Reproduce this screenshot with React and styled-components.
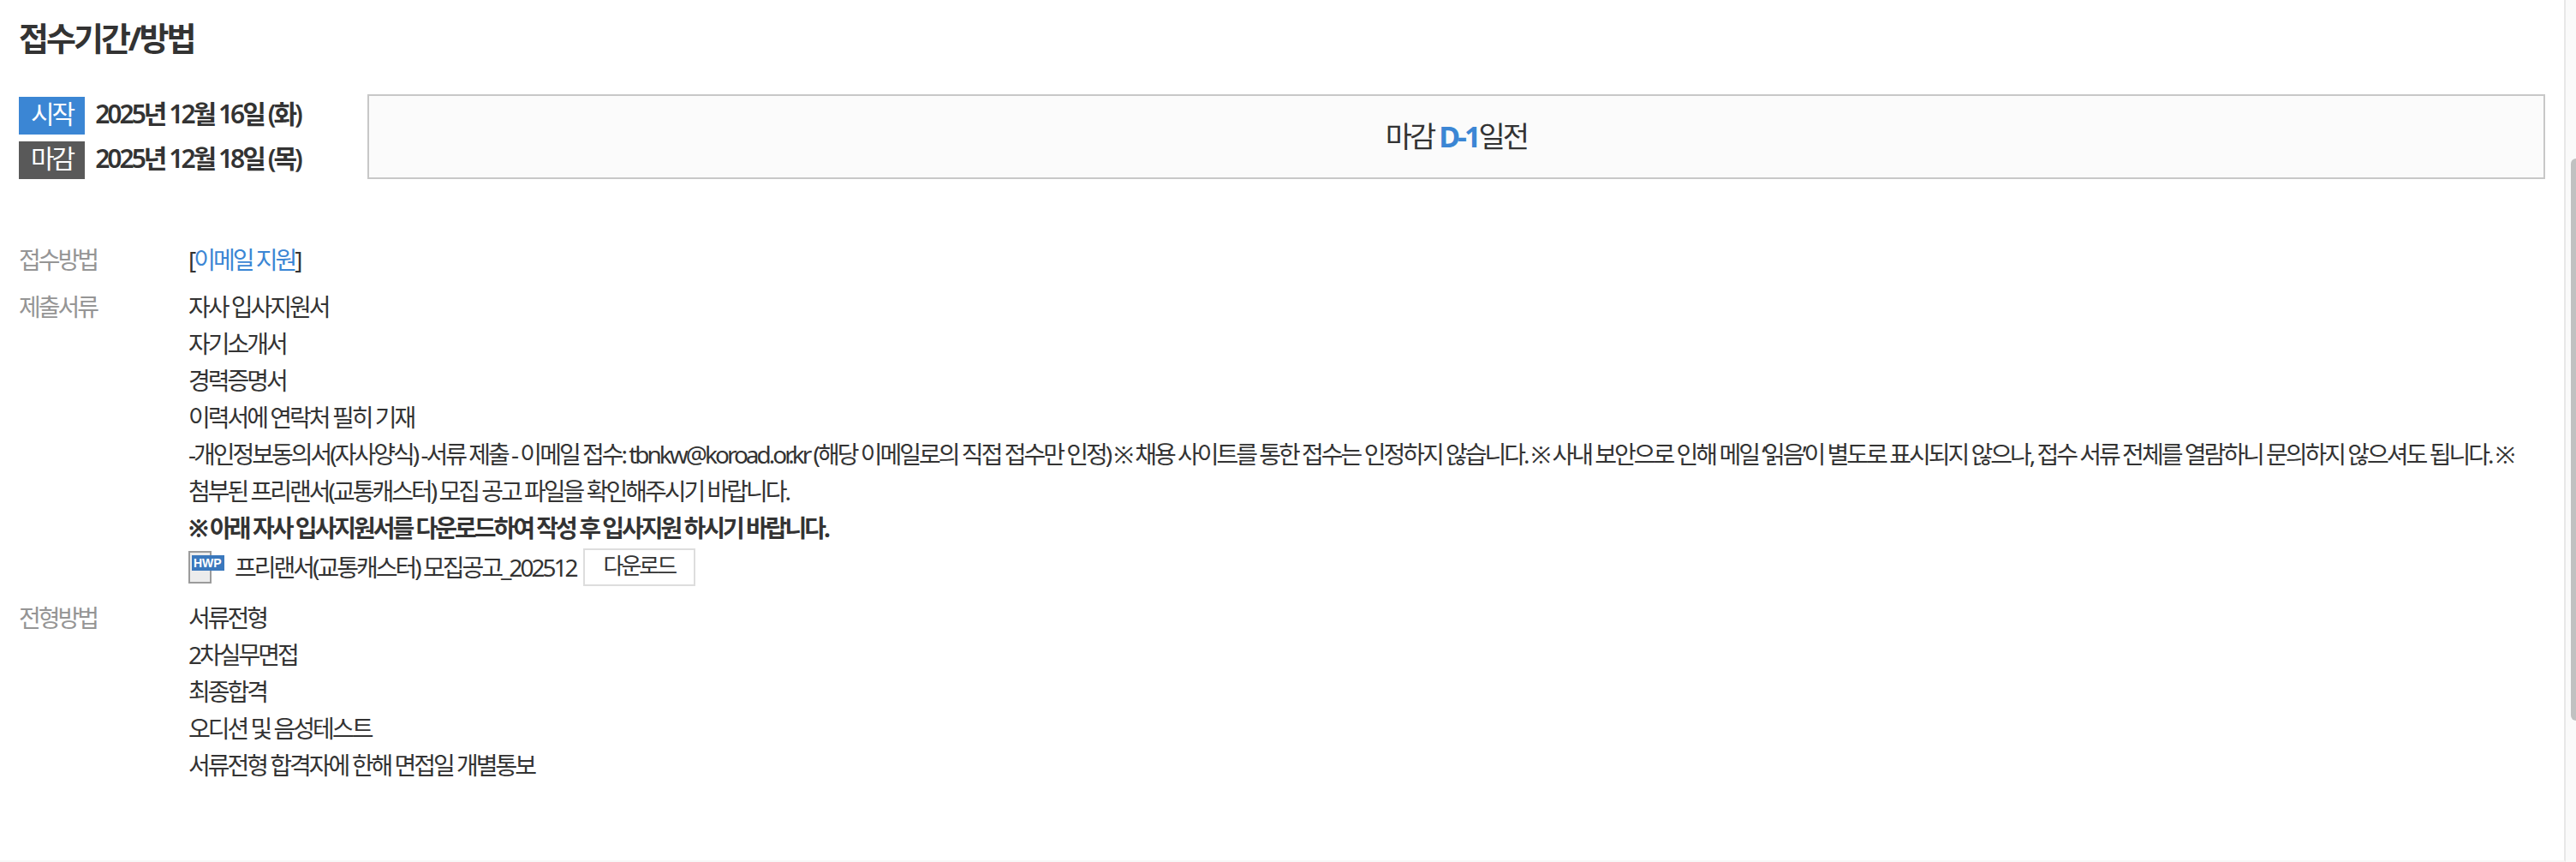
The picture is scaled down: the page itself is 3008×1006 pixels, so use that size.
import React from 'react';
import styled, { createGlobalStyle } from 'styled-components';

const documents = ['자사 입사지원서', '자기소개서', '경력증명서', '이력서에 연락처 필히 기재'];

const notice =
    '-개인정보동의서(자사양식) -서류 제출 - 이메일 접수: tbnkw@koroad.or.kr (해당 이메일로의 직접 접수만 인정) ※ 채용 사이트를 통한 접수는 인정하지 않습니다. ※ 사내 보안으로 인해 메일 ‘읽음’이 별도로 표시되지 않으나, 접수 서류 전체를 열람하니 문의하지 않으셔도 됩니다. ※ 첨부된 프리랜서(교통캐스터) 모집 공고 파일을 확인해주시기 바랍니다.';

const steps = ['서류전형', '2차실무면접', '최종합격', '오디션 및 음성테스트', '서류전형 합격자에 한해 면접일 개별통보'];

function HwpIcon() {
    return (
        <FileIcon viewBox='0 0 42 38' role='img' aria-label='HWP'>
            <rect x='1' y='1' width='25' height='36' fill='#ececec' stroke='#9b9b9b' strokeWidth='2' />
            <rect x='4' y='5' width='38' height='18' fill='#3a78bd' />
            <text x='6' y='19'>HWP</text>
        </FileIcon>
    )
}

function Period() {
    return (
        <PeriodRow>
            <Dates>
                <DateLine>
                    <Badge $start>시작</Badge>
                    <time dateTime='2025-12-16'>2025년 12월 16일 (화)</time>
                </DateLine>
                <DateLine>
                    <Badge>마감</Badge>
                    <time dateTime='2025-12-18'>2025년 12월 18일 (목)</time>
                </DateLine>
            </Dates>
            <Dday>
                <p>마감 <strong>D-1</strong>일전</p>
            </Dday>
        </PeriodRow>
    )
}

export default function App() {
    return (
        <Page>
            <GlobalStyle />
            <Content>
                <Title>접수기간/방법</Title>
                <Period />
                <Info>
                    <dt>접수방법</dt>
                    <dd>[<a href='#email'>이메일 지원</a>]</dd>
                    <dt>제출서류</dt>
                    <dd>
                        {documents.map((name) => <p key={name}>{name}</p>)}
                        <p>{notice}</p>
                        <p><strong>※ 아래 자사 입사지원서를 다운로드하여 작성 후 입사지원 하시기 바랍니다.</strong></p>
                        <FileRow>
                            <HwpIcon />
                            <span>프리랜서(교통캐스터) 모집공고_202512</span>
                            <Download type='button'>다운로드</Download>
                        </FileRow>
                    </dd>
                    <dt>전형방법</dt>
                    <dd>
                        {steps.map((name) => <p key={name}>{name}</p>)}
                    </dd>
                </Info>
            </Content>
            <ScrollTrack>
                <ScrollThumb />
            </ScrollTrack>
        </Page>
    )
}

const GlobalStyle = createGlobalStyle`
    * {
        box-sizing: border-box;
    }
    body {
        margin: 0;
        background: #fff;
        color: #333;
        font-family: 'Noto Sans', 'Noto Sans CJK KR', sans-serif;
        font-size: 28px;
        line-height: 43px;
        letter-spacing: -3px;
        word-break: keep-all;
    }
    p, dl, dd {
        margin: 0;
    }
`

const Page = styled.div`
    display: flex;
    min-height: 100vh;
`

const Content = styled.main`
    flex: 1;
    min-width: 0;
    padding: 20px 22px;
    border-right: 2px solid #e8e8e8;
    border-bottom: 2px solid #f7f7f7;
`

const Title = styled.h2`
    margin: 0 0 42px;
    font-size: 38px;
    line-height: 48px;
    font-weight: 700;
`

const PeriodRow = styled.section`
    display: flex;
    align-items: stretch;
    gap: 78px;
`

const Dates = styled.div`
    display: flex;
    flex-direction: column;
    gap: 8px;
    padding-top: 3px;
`

const DateLine = styled.div`
    display: flex;
    gap: 12px;
    font-size: 30px;
    line-height: 40px;
    font-weight: 600;
    white-space: nowrap;
`

const Badge = styled.span`
    height: 44px;
    padding: 0 14px;
    background: ${props => props.$start ? '#3b86d4' : '#595959'};
    color: #fff;
    font-weight: 400;
`

const Dday = styled.div`
    display: flex;
    flex: 1;
    align-items: center;
    justify-content: center;
    border: 2px solid #c8c8c8;
    background: #fbfbfb;
    font-size: 34px;
    strong {
        color: #3b86d4;
        font-weight: 700;
    }
`

const Info = styled.dl`
    display: grid;
    grid-template-columns: 198px 1fr;
    row-gap: 12px;
    margin-top: 73px;
    dt {
        color: #959595;
    }
    a {
        color: #3b86d4;
        text-decoration: none;
    }
`

const FileRow = styled.div`
    display: flex;
    align-items: center;
    padding: 2px 0 4px;
`

const FileIcon = styled.svg`
    width: 42px;
    height: 38px;
    margin-right: 12px;
    text {
        fill: #fff;
        font-family: 'Liberation Sans', sans-serif;
        font-size: 14px;
        font-weight: 700;
        letter-spacing: normal;
    }
`

const Download = styled.button`
    height: 44px;
    margin-left: 8px;
    padding: 0 22px 4px;
    border: 2px solid #ddd;
    background: #fff;
    color: #333;
    font: inherit;
    font-size: 26px;
    line-height: 36px;
    letter-spacing: inherit;
    cursor: pointer;
`

const ScrollTrack = styled.div`
    width: 12px;
    padding: 185px 0 0 6px;
    background: #fafafa;
`

const ScrollThumb = styled.div`
    height: 656px;
    border-radius: 8px 0 0 8px;
    background: #c1c1c1;
`
